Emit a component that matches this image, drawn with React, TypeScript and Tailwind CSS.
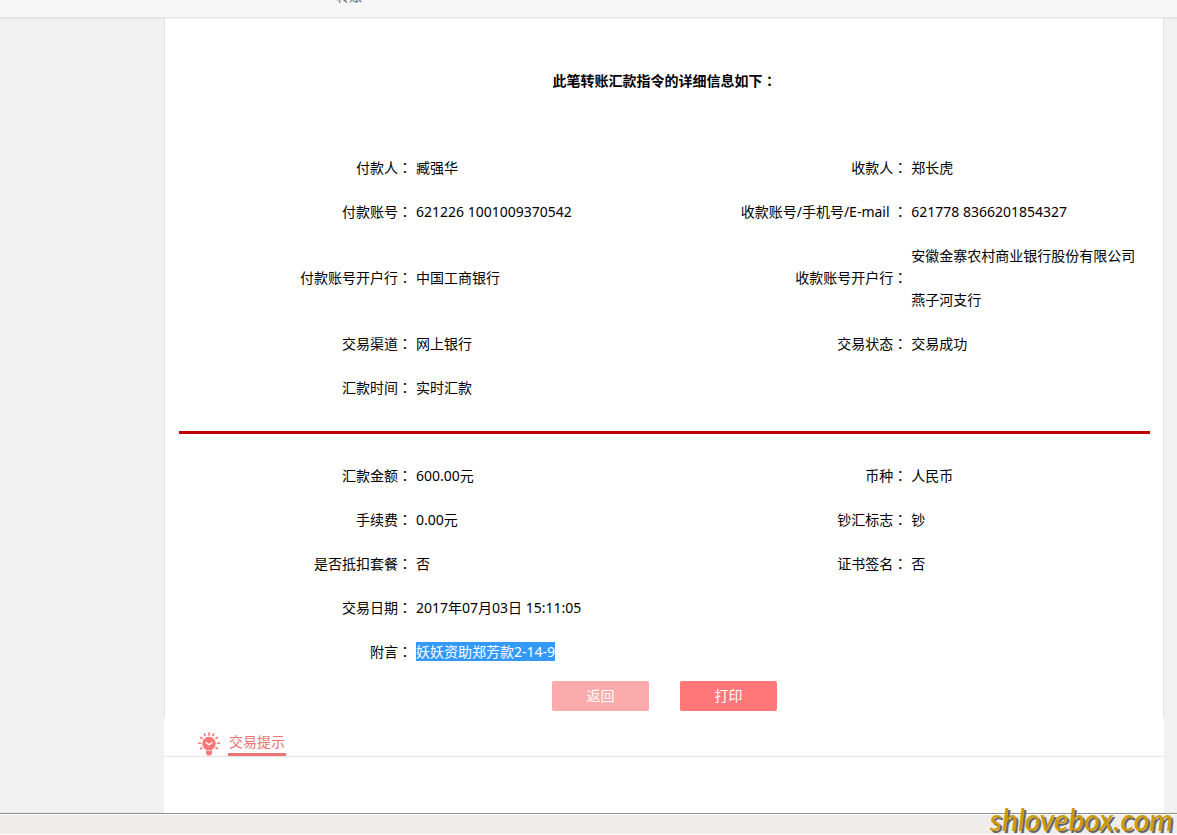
import type { ReactNode } from 'react';

type Field = { label: string; value: ReactNode };

const TRANSFER_ROWS: [Field, Field?][] = [
  [
    { label: '付款人', value: '臧强华' },
    { label: '收款人', value: '郑长虎' },
  ],
  [
    { label: '付款账号', value: '621226 1001009370542' },
    { label: '收款账号/手机号/E-mail ', value: '621778 8366201854327' },
  ],
  [
    { label: '付款账号开户行', value: '中国工商银行' },
    { label: '收款账号开户行', value: '安徽金寨农村商业银行股份有限公司燕子河支行' },
  ],
  [
    { label: '交易渠道', value: '网上银行' },
    { label: '交易状态', value: '交易成功' },
  ],
  [{ label: '汇款时间', value: '实时汇款' }],
];

const AMOUNT_ROWS: [Field, Field?][] = [
  [
    { label: '汇款金额', value: '600.00元' },
    { label: '币种', value: '人民币' },
  ],
  [
    { label: '手续费', value: '0.00元' },
    { label: '钞汇标志', value: '钞' },
  ],
  [
    { label: '是否抵扣套餐', value: '否' },
    { label: '证书签名', value: '否' },
  ],
  [{ label: '交易日期', value: '2017年07月03日 15:11:05' }],
  [
    {
      label: '附言',
      value: <mark className="bg-[#3399ff] text-white">妖妖资助郑芳款2-14-9</mark>,
    },
  ],
];

// the TC face sets the full-width colon in the middle of its box
function Colon() {
  return (
    <span lang="zh-TW" className="leading-none font-['Noto_Sans_CJK_TC',sans-serif]">
      ：
    </span>
  );
}

function Cells({ field }: { field?: Field }) {
  if (!field) return <td colSpan={2} />;
  return (
    <>
      <th scope="row" className="p-0 text-right font-normal whitespace-pre">
        {field.label}
        <Colon />
      </th>
      <td className="py-0 pl-1 pr-2">{field.value}</td>
    </>
  );
}

function Rows({ rows }: { rows: [Field, Field?][] }) {
  return (
    <tbody>
      {rows.map(([left, right]) => (
        <tr key={left.label} className="h-11">
          <Cells field={left} />
          <Cells field={right} />
        </tr>
      ))}
    </tbody>
  );
}

function BulbIcon() {
  return (
    <svg className="w-[22px] h-6 shrink-0" viewBox="0 0 22 24" fill="none" aria-hidden="true">
      <circle cx="11" cy="11.5" r="6.7" fill="#ff7777" />
      <path d="M8 16h6v5l-1 2.5H9L8 21z" fill="#ff7777" />
      <path d="M7.5 18.5h7" stroke="#fff" strokeWidth="0.6" />
      <path d="M7.7 10.2l3.3 2.6 3.3-2.6" stroke="#fff" strokeWidth="1.3" />
      <path
        d="M11 0.3v3.4M6 1.3l1.4 2.8M16 1.3l-1.4 2.8M2 5.2l2.6 1.6M20 5.2l-2.6 1.6M0 11.3h3.2M22 11.3h-3.2M2 17l2.5-1.5M20 17l-2.5-1.5"
        stroke="#ff7777"
        strokeWidth="1.6"
      />
    </svg>
  );
}

export default function App() {
  return (
    <div
      lang="zh-CN"
      className="min-h-screen flex flex-col bg-[#f1f1f1] text-black text-sm font-['Noto_Sans','Noto_Sans_CJK_SC',sans-serif]"
    >
      <header className="relative h-[17px] shrink-0 overflow-hidden bg-[#f7f7f7]">
        <a href="#transfer" className="absolute left-[336px] bottom-[11px] text-[13px] leading-5 text-[#666666]">
          转账
        </a>
      </header>
      <div className="h-[3px] -mb-[3px] z-10 border-t border-[#e4e4e4] bg-linear-to-b from-black/5 to-transparent" />

      <main className="grow flex flex-col ml-[164px] mr-[13px] bg-white">
        <section className="border-x border-[#e6e6e6] pl-[14px] pr-[13px] pt-[42px]">
          <h1 className="h-[87px] text-center font-bold leading-11">
            此笔转账汇款指令的详细信息如下
            <Colon />
          </h1>

          <table className="w-full table-fixed border-collapse leading-11">
            <colgroup>
              <col className="w-[24%]" />
              <col className="w-[27%]" />
              <col className="w-[24%]" />
              <col className="w-[25%]" />
            </colgroup>
            <Rows rows={TRANSFER_ROWS} />
            <tbody>
              <tr className="h-11">
                <td colSpan={4} className="p-0">
                  <hr className="h-[3px] border-0 bg-[#c00000]" />
                </td>
              </tr>
            </tbody>
            <Rows rows={AMOUNT_ROWS} />
          </table>

          <div className="flex justify-center gap-[31px] pt-[7px] pb-[7px]">
            <button type="button" className="w-[97px] h-[30px] rounded-xs bg-[#fbabab] text-white">
              返回
            </button>
            <button type="button" className="w-[97px] h-[30px] rounded-xs bg-[#ff7878] text-white">
              打印
            </button>
          </div>
        </section>

        <section className="flex items-end gap-2 h-[39px] pl-[34px] border-b border-[#e5e5e5]">
          <BulbIcon />
          <h2 className="border-b-[3px] border-[#ec7373] text-[#ec7373] leading-[22px] px-px">
            交易提示
          </h2>
        </section>
      </main>

      <footer className="relative h-[22px] shrink-0 border-t border-[#8c8c8c] bg-[#f0ecea] shadow-[inset_0_1px_0_#ffffff,inset_0_-1px_0_#ffffff]">
        <span className="absolute right-1 -bottom-0.5 text-[30px] leading-9 italic font-medium text-[#cc9900] font-['Lato',sans-serif] [text-shadow:2px_2px_0_#666666]">
          shlovebox.com
        </span>
      </footer>
    </div>
  );
}
